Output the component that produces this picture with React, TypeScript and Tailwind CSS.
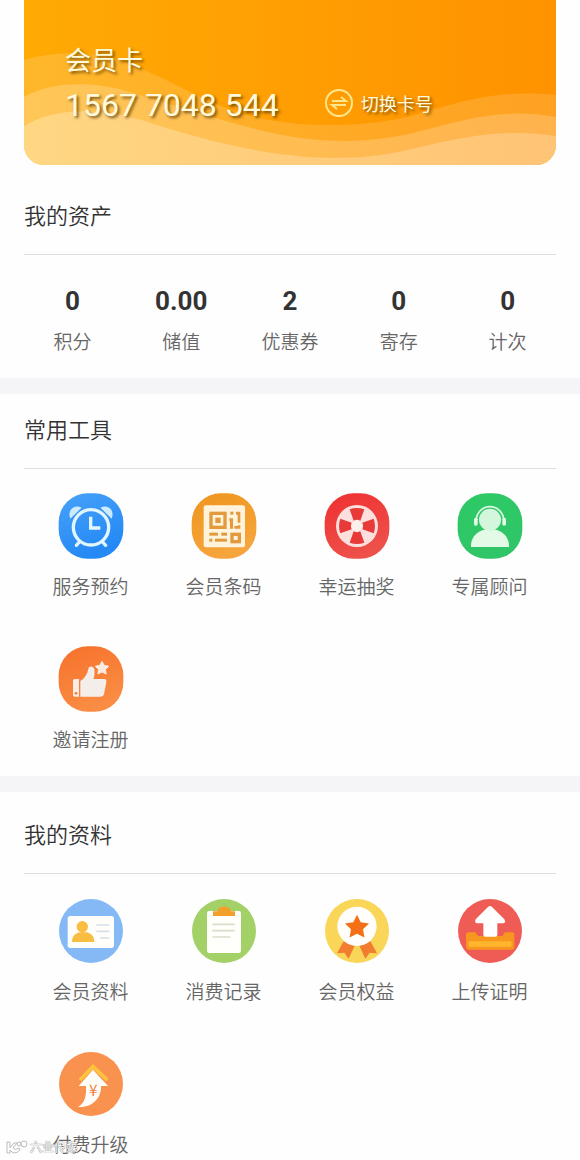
import type { ReactNode } from "react";

type Item = { label: string; icon: ReactNode };

function Icon({ children }: { children: ReactNode }) {
  return (
    <svg viewBox="0 0 198 198" className="size-[66px]" aria-hidden="true">
      {children}
    </svg>
  );
}

function Tile({ id, from, to }: { id: string; from: string; to: string }) {
  return (
    <>
      <defs>
        <linearGradient id={id} x1="0" y1="0" x2="0.4" y2="1">
          <stop offset="0" stopColor={from} />
          <stop offset="1" stopColor={to} />
        </linearGradient>
      </defs>
      <rect x="2" y="1" width="194" height="196" rx="87" fill={`url(#${id})`} />
    </>
  );
}

function starPoints(cx: number, cy: number, outer: number, inner: number) {
  return Array.from({ length: 10 }, (_, i) => {
    const r = i % 2 ? inner : outer;
    const a = (Math.PI * i) / 5 - Math.PI / 2;
    return `${(cx + r * Math.cos(a)).toFixed(1)},${(cy + r * Math.sin(a)).toFixed(1)}`;
  }).join(" ");
}

const tools: Item[] = [
  {
    label: "服务预约",
    icon: (
      <Icon>
        <Tile id="blue" from="#47a1f8" to="#2489f5" />
        <path d="M37 77C27 52 48 32 71 44Z" fill="#cdebff" />
        <path d="M161 77C171 52 150 32 127 44Z" fill="#cdebff" />
        <g fill="none" stroke="#e2f6ff" strokeWidth="10" strokeLinecap="round">
          <circle cx="99" cy="103" r="53" />
          <path d="M64 147L55 157M134 147L143 157" />
          <path d="M98 71V105H127" strokeLinecap="butt" />
        </g>
      </Icon>
    ),
  },
  {
    label: "会员条码",
    icon: (
      <Icon>
        <Tile id="amber" from="#ee951d" to="#f6a53c" />
        <rect x="38" y="37" width="124" height="126" rx="6" fill="#fff3dc" />
        <g fill="none" stroke="#e29a3c" strokeWidth="10">
          <rect x="60" y="61" width="42" height="42" />
          <rect x="123" y="124" width="22" height="22" />
        </g>
        <g fill="#e29a3c">
          <rect x="73" y="74" width="16" height="16" />
          <rect x="118" y="56" width="9" height="9" />
          <path d="M115 76H126V107H117V85H115Z" />
          <path d="M135 56H148V89H140V65H135Z" />
          <path d="M140 97H148V107H130V99H140Z" />
          <rect x="55" y="119" width="26" height="9" />
          <rect x="91" y="119" width="17" height="9" />
          <rect x="55" y="137" width="9" height="9" />
          <rect x="72" y="137" width="36" height="9" />
        </g>
      </Icon>
    ),
  },
  {
    label: "幸运抽奖",
    icon: (
      <Icon>
        <Tile id="red" from="#ef3031" to="#ee504a" />
        <circle cx="99" cy="99" r="63" fill="#fde0dd" />
        <g fill="#e83a39">
          {[0, 90, 180, 270].map((a) => (
            <path key={a} d="M77 49Q99 41 121 49L109 83Q99 78 89 83Z" transform={`rotate(${a} 99 99)`} />
          ))}
        </g>
        <circle cx="99" cy="99" r="17" fill="#fff0ec" />
      </Icon>
    ),
  },
  {
    label: "专属顾问",
    icon: (
      <Icon>
        <Tile id="green" from="#2dca65" to="#30c568" />
        <path d="M42 162V156C43 129 65 108 99 108C133 108 155 129 156 156V162Z" fill="#e3fae7" />
        <circle cx="99" cy="80" r="33" fill="#d3f6dc" />
        <path d="M58 82A41 41 0 0 1 140 82" fill="none" stroke="#d9f8df" strokeWidth="5" />
        <rect x="51" y="74" width="11" height="24" rx="5" fill="#e3fae7" />
        <rect x="136" y="74" width="11" height="24" rx="5" fill="#e3fae7" />
      </Icon>
    ),
  },
  {
    label: "邀请注册",
    icon: (
      <Icon>
        <Tile id="orange" from="#f6712b" to="#fa8c43" />
        <path
          d="M67 152V105C80 98 88 85 91 69C93 58 107 60 109 70C111 80 109 92 106 99H138Q147 99 145 108L138 145Q136 152 128 152Z"
          fill="#f4eeeb"
        />
        <path d="M50 99H63V152H50Q45 152 45 147V104Q45 99 50 99Z" fill="#fbede6" />
        <circle cx="54" cy="142" r="4" fill="#f57b35" />
        <polygon points={starPoints(132, 67, 21, 11)} fill="#fbeae1" stroke="#fbeae1" strokeWidth="3" strokeLinejoin="round" />
      </Icon>
    ),
  },
];

const records: Item[] = [
  {
    label: "会员资料",
    icon: (
      <Icon>
        <circle cx="99" cy="99" r="96" fill="#84b9f6" />
        <rect x="29" y="54" width="139" height="96" rx="8" fill="#fffefb" />
        <circle cx="73" cy="86" r="17" fill="#f9bd42" />
        <path d="M42 132C42 112 54 102 75 102C97 102 109 112 109 132Z" fill="#f9bd42" />
        <path d="M115 81H154M115 100H154M127 120H154" stroke="#d5e0ea" strokeWidth="5" />
      </Icon>
    ),
  },
  {
    label: "消费记录",
    icon: (
      <Icon>
        <circle cx="99" cy="99" r="96" fill="#a3d168" />
        <rect x="48" y="39" width="102" height="126" rx="7" fill="#fffffb" />
        <path d="M66 54V40H79C83 21 117 21 120 40H132V54Z" fill="#f2a02b" />
        <path d="M64 79H131M64 98H131M64 117H118" stroke="#dcdccb" strokeWidth="5" />
      </Icon>
    ),
  },
  {
    label: "会员权益",
    icon: (
      <Icon>
        <circle cx="99" cy="99" r="96" fill="#f9d558" />
        <path d="M59 130L39 166L61 164L74 182L92 143Z" fill="#f27d31" />
        <path d="M139 130L159 166L137 164L124 182L106 143Z" fill="#f27d31" />
        <circle cx="99" cy="85" r="59" fill="#fffefa" />
        <polygon points={starPoints(99, 88, 38, 19)} fill="#f37016" />
      </Icon>
    ),
  },
  {
    label: "上传证明",
    icon: (
      <Icon>
        <circle cx="99" cy="99" r="96" fill="#ef5c56" />
        <path
          d="M27 110Q27 103 34 103H55L63 114H136L144 103H164Q172 103 172 110V148Q172 155 164 155H34Q27 155 27 148Z"
          fill="#f89720"
        />
        <rect x="35" y="130" width="128" height="16" rx="3" fill="#ffb52c" />
        <path
          d="M93 27Q99 21 105 27L142 64Q148 75 138 76H121V110Q121 116 115 116H85Q79 116 79 110V76H61Q51 75 56 64Z"
          fill="#fff"
        />
      </Icon>
    ),
  },
  {
    label: "付费升级",
    icon: (
      <Icon>
        <circle cx="99" cy="99" r="96" fill="#f9924e" />
        <path d="M105 56L150 105H129C131 137 106 171 60 168C80 157 86 135 84 105H62Z" fill="#fffdf8" />
        <path d="M66 87L105 47L148 87" fill="none" stroke="#fcc43c" strokeWidth="11" />
        <text x="106" y="134" textAnchor="middle" fontSize="46" fontWeight="400" fontFamily="Noto Sans CJK SC, sans-serif" fill="#f17d45">
          ¥
        </text>
      </Icon>
    ),
  },
];

const assets = [
  { value: "0", label: "积分" },
  { value: "0.00", label: "储值" },
  { value: "2", label: "优惠券" },
  { value: "0", label: "寄存" },
  { value: "0", label: "计次" },
];

function Heading({ children }: { children: ReactNode }) {
  return (
    <h2 className="mx-6 border-b border-[#dfdfe2] pb-6 text-[22px] leading-8 text-[#333]">{children}</h2>
  );
}

function IconGrid({ items }: { items: Item[] }) {
  return (
    <div className="grid grid-cols-4 gap-y-[46px] px-6 pt-6">
      {items.map((item) => (
        <a key={item.label} href="#" className="flex flex-col items-center gap-[13px]">
          {item.icon}
          <span className="text-[19px] leading-7 whitespace-nowrap text-[#666]">{item.label}</span>
        </a>
      ))}
    </div>
  );
}

function MemberCard() {
  return (
    <header className="relative mx-6 overflow-hidden rounded-b-[20px] bg-linear-to-r from-[#ffaa05] to-[#ff9200] px-[41px] pt-[41px] pb-10 font-normal text-[#fffadb] [text-shadow:2px_2px_3px_rgba(80,50,0,0.75)]">
      <svg
        viewBox="24 0 532 165"
        preserveAspectRatio="none"
        className="absolute inset-0 size-full"
        aria-hidden="true"
      >
        <defs>
          <linearGradient id="foam" x1="0" y1="0" x2="1" y2="0">
            <stop offset="0" stopColor="#ffe1a0" />
            <stop offset="1" stopColor="#ffcf90" />
          </linearGradient>
        </defs>
        <g fill="url(#foam)">
          <path opacity="0.24" d="M24 60C60 49 102 51 140 68C170 81 205 101 237 112C285 128 355 129 407 117C450 106 490 88 556 95V165H24Z" />
          <path opacity="0.38" d="M24 97C50 82 90 80 130 92C160 101 215 119 259 130C320 145 375 144 425 130C470 118 505 108 556 117V165H24Z" />
          <path opacity="0.6" d="M24 126C55 107 100 107 148 122C180 133 245 151 289 155C325 160 370 159 407 150C450 140 500 127 556 136V165H24Z" />
        </g>
      </svg>
      <div className="relative">
        <p className="text-[26px] leading-9">会员卡</p>
        <div className="mt-2 flex items-center gap-[46px]">
          <p className="font-[Roboto,sans-serif] text-[32px] leading-10 whitespace-nowrap">1567 7048 544</p>
          <button type="button" className="flex items-center gap-2 pb-1 text-[18px] leading-6 whitespace-nowrap [text-shadow:inherit]">
            <svg viewBox="0 0 28 28" className="size-7" fill="none" stroke="#ffe68a" strokeWidth="2" aria-hidden="true">
              <circle cx="14" cy="14" r="13" />
              <path d="M7 12H21L16 8M21 16H7L12 20" />
            </svg>
            切换卡号
          </button>
        </div>
      </div>
    </header>
  );
}

export default function App() {
  return (
    <main className="relative bg-[#fefefe] font-['Noto_Sans_CJK_SC',sans-serif] font-[350]">
      <MemberCard />
      <section className="pt-[33px] pb-[23px]">
        <Heading>我的资产</Heading>
        <dl className="grid grid-cols-5 px-[18px] pt-[30px]">
          {assets.map((asset) => (
            <div key={asset.label} className="flex flex-col-reverse items-center gap-[10px]">
              <dt className="text-[19px] leading-7 text-[#666]">{asset.label}</dt>
              <dd className="font-[Roboto,sans-serif] text-[26px] leading-8 font-bold text-[#333]">{asset.value}</dd>
            </div>
          ))}
        </dl>
      </section>
      <section className="border-t-16 border-[#f5f5f7] pt-[18px] pb-[23px]">
        <Heading>常用工具</Heading>
        <IconGrid items={tools} />
      </section>
      <section className="border-t-16 border-[#f5f5f7] pt-[25px] pb-px">
        <Heading>我的资料</Heading>
        <IconGrid items={records} />
      </section>
      <div className="absolute bottom-1 left-[6px] flex items-center gap-[2px] text-[12px] leading-4 text-white [text-shadow:0_0_1px_#777,0_0_1px_#777]">
        <svg viewBox="0 0 22 16" className="h-4 w-[22px]" fill="none" stroke="#bbb" strokeWidth="1" aria-hidden="true">
          <path d="M1 3H4V9L8 4H11L7 9Q9 12 13 9L14 11Q8 17 4 11V14H1Z" fill="#fff" />
          <circle cx="13" cy="5" r="2" fill="#fff" />
          <circle cx="18" cy="5" r="3" fill="#fff" />
        </svg>
        <span>六业传媒</span>
      </div>
    </main>
  );
}
